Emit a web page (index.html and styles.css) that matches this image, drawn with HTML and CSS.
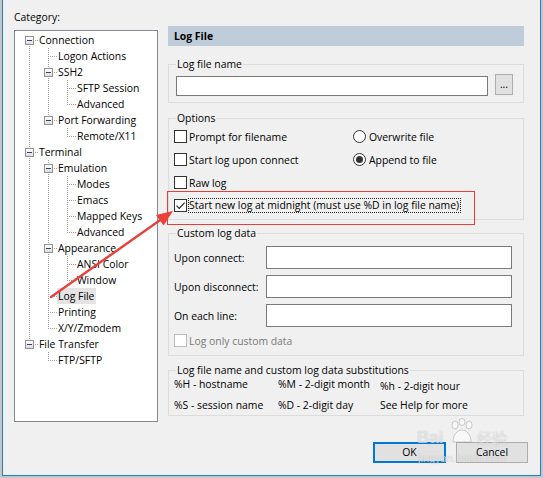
FILE: index.html
```html
<!DOCTYPE html>
<html>
<head>
<meta charset="utf-8">
<link rel="stylesheet" href="styles.css">
</head>
<body>
<div class="dialog">
  <div class="main">
    <div class="left">
      <div class="cat-label">Category:</div>
      <div class="tree">
        <div class="row"><span class="c f"><span class="box"></span></span><span class="lbl">Connection</span></div>
        <div class="row"><span class="c v"></span><span class="c t"></span><span class="lbl">Logon Actions</span></div>
        <div class="row"><span class="c v"></span><span class="c t"><span class="box"></span></span><span class="lbl">SSH2</span></div>
        <div class="row"><span class="c v"></span><span class="c v"></span><span class="c t"></span><span class="lbl">SFTP Session</span></div>
        <div class="row"><span class="c v"></span><span class="c v"></span><span class="c l"></span><span class="lbl">Advanced</span></div>
        <div class="row"><span class="c v"></span><span class="c l"><span class="box"></span></span><span class="lbl">Port Forwarding</span></div>
        <div class="row"><span class="c v"></span><span class="c"></span><span class="c l"></span><span class="lbl">Remote/X11</span></div>
        <div class="row"><span class="c t"><span class="box"></span></span><span class="lbl">Terminal</span></div>
        <div class="row"><span class="c v"></span><span class="c t"><span class="box"></span></span><span class="lbl">Emulation</span></div>
        <div class="row"><span class="c v"></span><span class="c v"></span><span class="c t"></span><span class="lbl">Modes</span></div>
        <div class="row"><span class="c v"></span><span class="c v"></span><span class="c t"></span><span class="lbl">Emacs</span></div>
        <div class="row"><span class="c v"></span><span class="c v"></span><span class="c t"></span><span class="lbl">Mapped Keys</span></div>
        <div class="row"><span class="c v"></span><span class="c v"></span><span class="c l"></span><span class="lbl">Advanced</span></div>
        <div class="row"><span class="c v"></span><span class="c t"><span class="box"></span></span><span class="lbl">Appearance</span></div>
        <div class="row"><span class="c v"></span><span class="c v"></span><span class="c t"></span><span class="lbl">ANSI Color</span></div>
        <div class="row"><span class="c v"></span><span class="c v"></span><span class="c l"></span><span class="lbl">Window</span></div>
        <div class="row"><span class="c v"></span><span class="c t"></span><span class="lbl sel">Log File</span></div>
        <div class="row"><span class="c v"></span><span class="c t"></span><span class="lbl">Printing</span></div>
        <div class="row"><span class="c v"></span><span class="c l"></span><span class="lbl">X/Y/Zmodem</span></div>
        <div class="row"><span class="c l"><span class="box"></span></span><span class="lbl">File Transfer</span></div>
        <div class="row"><span class="c"></span><span class="c l"></span><span class="lbl">FTP/SFTP</span></div>
      </div>
    </div>
    <div class="right">
      <div class="header">Log File</div>

      <fieldset class="g g-name">
        <legend>Log file name</legend>
        <div class="name-row">
          <span class="input name-input"></span>
          <span class="btn-dots">...</span>
        </div>
      </fieldset>

      <fieldset class="g g-opts">
        <legend>Options</legend>
        <div class="opts">
          <div class="opt"><span class="chk"></span><span>Prompt for filename</span></div>
          <div class="opt"><span class="radio"></span><span>Overwrite file</span></div>
          <div class="opt"><span class="chk"></span><span>Start log upon connect</span></div>
          <div class="opt"><span class="radio on"><span class="dot"></span></span><span>Append to file</span></div>
          <div class="opt wide"><span class="chk"></span><span>Raw log</span></div>
          <div class="opt wide"><span class="chk tight"><svg width="11" height="11" viewBox="0 0 11 11"><path d="M1.5 5.6 L4.2 8.3 L9.6 2.6" fill="none" stroke="#222" stroke-width="1.2"/></svg></span><span class="focus">Start new log at midnight (must use %D in log file name)</span></div>
        </div>
      </fieldset>

      <fieldset class="g g-custom">
        <legend>Custom log data</legend>
        <div class="custom">
          <span class="clabel">Upon connect:</span><span class="input cinput"></span>
          <span class="clabel">Upon disconnect:</span><span class="input cinput"></span>
          <span class="clabel">On each line:</span><span class="input cinput"></span>
        </div>
        <div class="opt disabled"><span class="chk dis"></span><span>Log only custom data</span></div>
      </fieldset>

      <fieldset class="g g-subs">
        <legend>Log file name and custom log data substitutions</legend>
        <div class="subs">
          <span>%H - hostname</span><span>%M - 2-digit month</span><span class="low">%h - 2-digit hour</span>
          <span>%S - session name</span><span>%D - 2-digit day</span><span>See Help for more</span>
        </div>
      </fieldset>
    </div>
  </div>
  <div class="buttons">
    <span class="btn ok">OK</span>
    <span class="btn">Cancel</span>
  </div>
</div>

<div class="redbox"></div>
<svg class="arrow" width="543" height="478" viewBox="0 0 543 478">
  <line x1="51" y1="297" x2="161" y2="219.5" stroke="#e8403b" stroke-width="2.4" stroke-linecap="round"/>
  <polygon points="173,211 156,215 163.5,225.5" fill="#e8403b"/>
</svg>

<div class="wm">
  <span class="wm-bai">Bai</span>
  <svg class="wm-paw" width="26" height="28" viewBox="0 0 26 28">
    <g fill="rgba(255,255,255,0.55)" stroke="rgba(120,120,120,0.35)" stroke-width="1">
      <ellipse cx="6" cy="7" rx="3" ry="4"/>
      <ellipse cx="13" cy="4" rx="3" ry="3.6"/>
      <ellipse cx="20" cy="7" rx="3" ry="4"/>
      <path d="M4 24 C4 16 9 12 13 12 C17 12 22 16 22 24 Z"/>
    </g>
  </svg>
  <span class="wm-jy">经验</span>
  <span class="wm-url">jingyan.baidu.com</span>
</div>
</body>
</html>
```

FILE: styles.css
```css
body {
  margin: 0;
  width: 543px;
  height: 478px;
  overflow: hidden;
  background: #c6c6c6;
  font-family: "Open Sans", "Liberation Sans", sans-serif;
  font-size: 10.4px;
  color: #000;
}

.dialog {
  margin-left: 2px;
  width: 539px;
  height: 476px;
  box-sizing: border-box;
  border: 1px solid #1c7fd6;
  border-top: none;
  background: #f0f0f0;
  display: flex;
  flex-direction: column;
}

.main {
  display: flex;
  padding-left: 11px;
}

.left {
  width: 144px;
  padding-top: 10px;
}

.cat-label {
  line-height: 14px;
}

.tree {
  margin-top: 6px;
  height: 392px;
  box-sizing: border-box;
  border: 1px solid #828790;
  background: #fff;
  padding: 1px 0 0 4px;
}

.row {
  display: flex;
  height: 16px;
  line-height: 16px;
  white-space: nowrap;
}

.c {
  flex: none;
  width: 19px;
  height: 16px;
  display: flex;
  align-items: center;
  background-repeat: no-repeat;
}

.c.v {
  background-image: repeating-linear-gradient(to bottom, #a0a0a0 0 1px, transparent 1px 2px);
  background-size: 1px 16px;
  background-position: 10px 0;
}

.c.t {
  background-image:
    repeating-linear-gradient(to bottom, #a0a0a0 0 1px, transparent 1px 2px),
    repeating-linear-gradient(to right, #a0a0a0 0 1px, transparent 1px 2px);
  background-size: 1px 16px, 9px 1px;
  background-position: 10px 0, 10px 8px;
}

.c.l {
  background-image:
    repeating-linear-gradient(to bottom, #a0a0a0 0 1px, transparent 1px 2px),
    repeating-linear-gradient(to right, #a0a0a0 0 1px, transparent 1px 2px);
  background-size: 1px 9px, 9px 1px;
  background-position: 10px 0, 10px 8px;
}

.c.f {
  background-image:
    repeating-linear-gradient(to bottom, #a0a0a0 0 1px, transparent 1px 2px),
    repeating-linear-gradient(to right, #a0a0a0 0 1px, transparent 1px 2px);
  background-size: 1px 8px, 9px 1px;
  background-position: 10px 8px, 10px 8px;
}

.box {
  width: 9px;
  height: 9px;
  margin-left: 6px;
  box-sizing: border-box;
  border: 1px solid #919191;
  background: linear-gradient(#ffffff, #dcdcdc);
  display: flex;
  align-items: center;
  justify-content: center;
}

.box::before {
  content: "";
  width: 5px;
  height: 1px;
  background: #2b3f73;
}

.lbl {
  padding: 0 2px 0 1px;
}

.lbl.sel {
  background: #e4e4e4;
}

.right {
  margin-left: 10px;
  width: 356px;
  padding-top: 26px;
}

.header {
  height: 20px;
  line-height: 20px;
  background: #bfcddb;
  font-weight: bold;
  padding-left: 6px;
}

.g {
  margin: 0;
  min-inline-size: 0;
  border: 1px solid #dcdcdc;
  padding: 0 10px 0 5px;
}

.g legend {
  padding: 0 1px;
  margin-left: 2px;
  line-height: 14px;
}

.g-name {
  margin-top: 11px;
  padding-top: 3px;
  padding-bottom: 6px;
}

.name-row {
  display: flex;
  align-items: flex-start;
  margin-left: 2px;
}

.input {
  display: block;
  box-sizing: border-box;
  border: 1px solid #7a7a7a;
  background: #fff;
}

.name-input {
  width: 312px;
  height: 20px;
  margin-top: 2px;
}

.btn-dots {
  margin-left: 7px;
  width: 18px;
  height: 21px;
  box-sizing: border-box;
  border: 1px solid #adadad;
  background: #e1e1e1;
  text-align: center;
  line-height: 19px;
}

.g-opts {
  margin-top: 8px;
  padding-bottom: 2px;
}

.opts {
  display: grid;
  grid-template-columns: 179px 1fr;
  grid-auto-rows: 23px;
}

.opt {
  display: flex;
  align-items: center;
  white-space: nowrap;
}

.opt.wide {
  grid-column: 1 / -1;
}

.chk {
  flex: none;
  width: 13px;
  height: 13px;
  box-sizing: border-box;
  border: 1px solid #333;
  background: #fff;
  margin-right: 2px;
  display: flex;
}

.chk.tight {
  margin-right: 1px;
}

.chk.dis {
  border-color: #bcbcbc;
}

.radio {
  flex: none;
  width: 13px;
  height: 13px;
  box-sizing: border-box;
  border: 1px solid #333;
  border-radius: 50%;
  background: #fff;
  margin-right: 3px;
  display: flex;
  align-items: center;
  justify-content: center;
}

.dot {
  width: 7px;
  height: 7px;
  border-radius: 50%;
  background: #333;
}

.focus {
  border: 1px dotted #222;
  line-height: 13px;
  padding: 0 1px 0 0;
}

.g-custom {
  margin-top: 6px;
  padding-top: 6px;
  padding-bottom: 7px;
  padding-right: 11px;
}

.custom {
  display: grid;
  grid-template-columns: 92px 246px;
  grid-auto-rows: 23px;
  row-gap: 6px;
  align-items: center;
}

.cinput {
  height: 23px;
}

.opt.disabled {
  margin-top: 6px;
  height: 15px;
  color: #7a7a7a;
}

.g-subs {
  margin-top: 7px;
  padding-bottom: 3px;
}

.subs {
  display: grid;
  grid-template-columns: 104px 102px auto;
  grid-auto-rows: 14px;
  row-gap: 7px;
  line-height: 14px;
  white-space: nowrap;
}

.subs .low {
  position: relative;
  top: 2px;
}

.buttons {
  display: flex;
  justify-content: flex-end;
  gap: 10px;
  padding-right: 12px;
  margin-top: 20px;
}

.btn {
  width: 72px;
  height: 21px;
  box-sizing: border-box;
  border: 1px solid #adadad;
  background: #e1e1e1;
  text-align: center;
  line-height: 19px;
}

.btn.ok {
  width: 73px;
  border: 2px solid #0078d7;
  line-height: 17px;
}

.redbox {
  position: absolute;
  left: 167px;
  top: 191px;
  width: 308px;
  height: 34px;
  box-sizing: border-box;
  border: 1px solid #ec3b3b;
}

.arrow {
  position: absolute;
  left: 0;
  top: 0;
  pointer-events: none;
}

.wm {
  position: absolute;
  left: 416px;
  top: 417px;
  width: 100px;
  height: 48px;
  pointer-events: none;
  color: rgba(255, 255, 255, 0.6);
  text-shadow: 0 0 1px rgba(110, 110, 110, 0.45);
}

.wm-bai {
  position: absolute;
  left: 1px;
  top: 12px;
  font-family: "Liberation Sans", sans-serif;
  font-weight: bold;
  font-size: 17px;
  line-height: 18px;
}

.wm-paw {
  position: absolute;
  left: 33px;
  top: 1px;
}

.wm-jy {
  position: absolute;
  left: 61px;
  top: 13px;
  font-family: "Noto Sans CJK SC", sans-serif;
  font-size: 15px;
  line-height: 16px;
}

.wm-url {
  position: absolute;
  left: 2px;
  top: 35px;
  font-family: "Liberation Sans", sans-serif;
  font-size: 11px;
  line-height: 12px;
}
```
